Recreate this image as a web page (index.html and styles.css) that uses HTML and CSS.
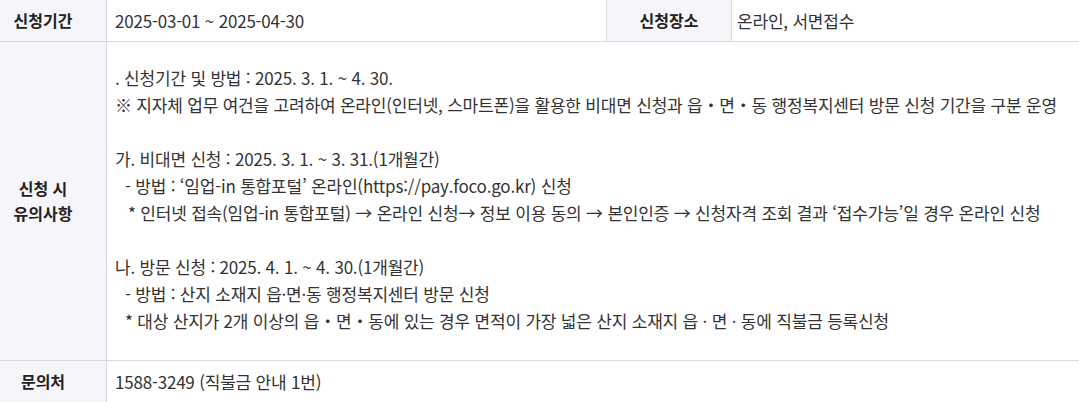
FILE: index.html
```html
<!DOCTYPE html>
<html lang="ko">
<head>
<meta charset="utf-8">
<link rel="stylesheet" href="styles.css">
</head>
<body>
<table class="info">
  <colgroup>
    <col class="c-label">
    <col class="c-value">
    <col class="c-label2">
    <col class="c-value2">
  </colgroup>
  <tr class="row-short">
    <th class="label first">신청기간</th>
    <td class="value">2025-03-01 ~ 2025-04-30</td>
    <th class="label">신청장소</th>
    <td class="value tight">온라인, 서면접수</td>
  </tr>
  <tr>
    <th class="label first">신청 시<br>유의사항</th>
    <td class="value long" colspan="3">
      <p>. 신청기간 및 방법 : 2025. 3. 1. ~ 4. 30.</p>
      <p>※ 지자체 업무 여건을 고려하여 온라인(인터넷, 스마트폰)을 활용한 비대면 신청과 읍・면・동 행정복지센터 방문 신청 기간을 구분 운영</p>
      <p class="gap">가. 비대면 신청 : 2025. 3. 1. ~ 3. 31.(1개월간)</p>
      <p class="ind1">- 방법 : ‘임업-in 통합포털’ 온라인(https://pay.foco.go.kr) 신청</p>
      <p class="ind2">* 인터넷 접속(임업-in 통합포털) → 온라인 신청→ 정보 이용 동의 → 본인인증 → 신청자격 조회 결과 ‘접수가능’일 경우 온라인 신청</p>
      <p class="gap">나. 방문 신청 : 2025. 4. 1. ~ 4. 30.(1개월간)</p>
      <p class="ind1">- 방법 : 산지 소재지 읍·면·동 행정복지센터 방문 신청</p>
      <p class="ind1">* 대상 산지가 2개 이상의 읍・면・동에 있는 경우 면적이 가장 넓은 산지 소재지 읍 · 면 · 동에 직불금 등록신청</p>
    </td>
  </tr>
  <tr class="row-short">
    <th class="label first">문의처</th>
    <td class="value" colspan="3">1588-3249 (직불금 안내 1번)</td>
  </tr>
</table>
</body>
</html>
```

FILE: styles.css
```css
html, body {
  margin: 0;
  padding: 0;
  background: #fff;
}

body {
  font-family: "Noto Sans CJK KR", "Noto Sans", sans-serif;
  font-size: 16px;
  color: #333;
}

.info {
  width: 1079px;
  table-layout: fixed;
  border-collapse: separate;
  border-spacing: 0;
}

.c-label { width: 107px; }
.c-value { width: 500px; }
.c-label2 { width: 125px; }
.c-value2 { width: 347px; }

.info th,
.info td {
  border-right: 1px solid #d8d8de;
  border-bottom: 1px solid #d8d8de;
  vertical-align: middle;
  line-height: 25px;
}

.info td:last-child { border-right: none; }

.row-short th,
.row-short td {
  height: 41px;
  padding-top: 0;
  padding-bottom: 0;
}

.label {
  background: #f5f5fa;
  color: #222;
  font-weight: 700;
  font-size: 16px;
  text-align: center;
  padding: 0;
}

.label.first {
  padding-right: 20px;
}

.value {
  text-align: left;
  padding: 0 8px;
  font-size: 17px;
  letter-spacing: -0.2px;
}

.value.tight {
  padding-left: 5px;
}

.long {
  padding: 22px 8px 26px 8px;
}

.long p {
  margin: 0;
  line-height: 27px;
}

.long p.gap {
  margin-top: 27px;
}

.long p.ind1 { padding-left: 10px; }
.long p.ind2 { padding-left: 13px; }
```
